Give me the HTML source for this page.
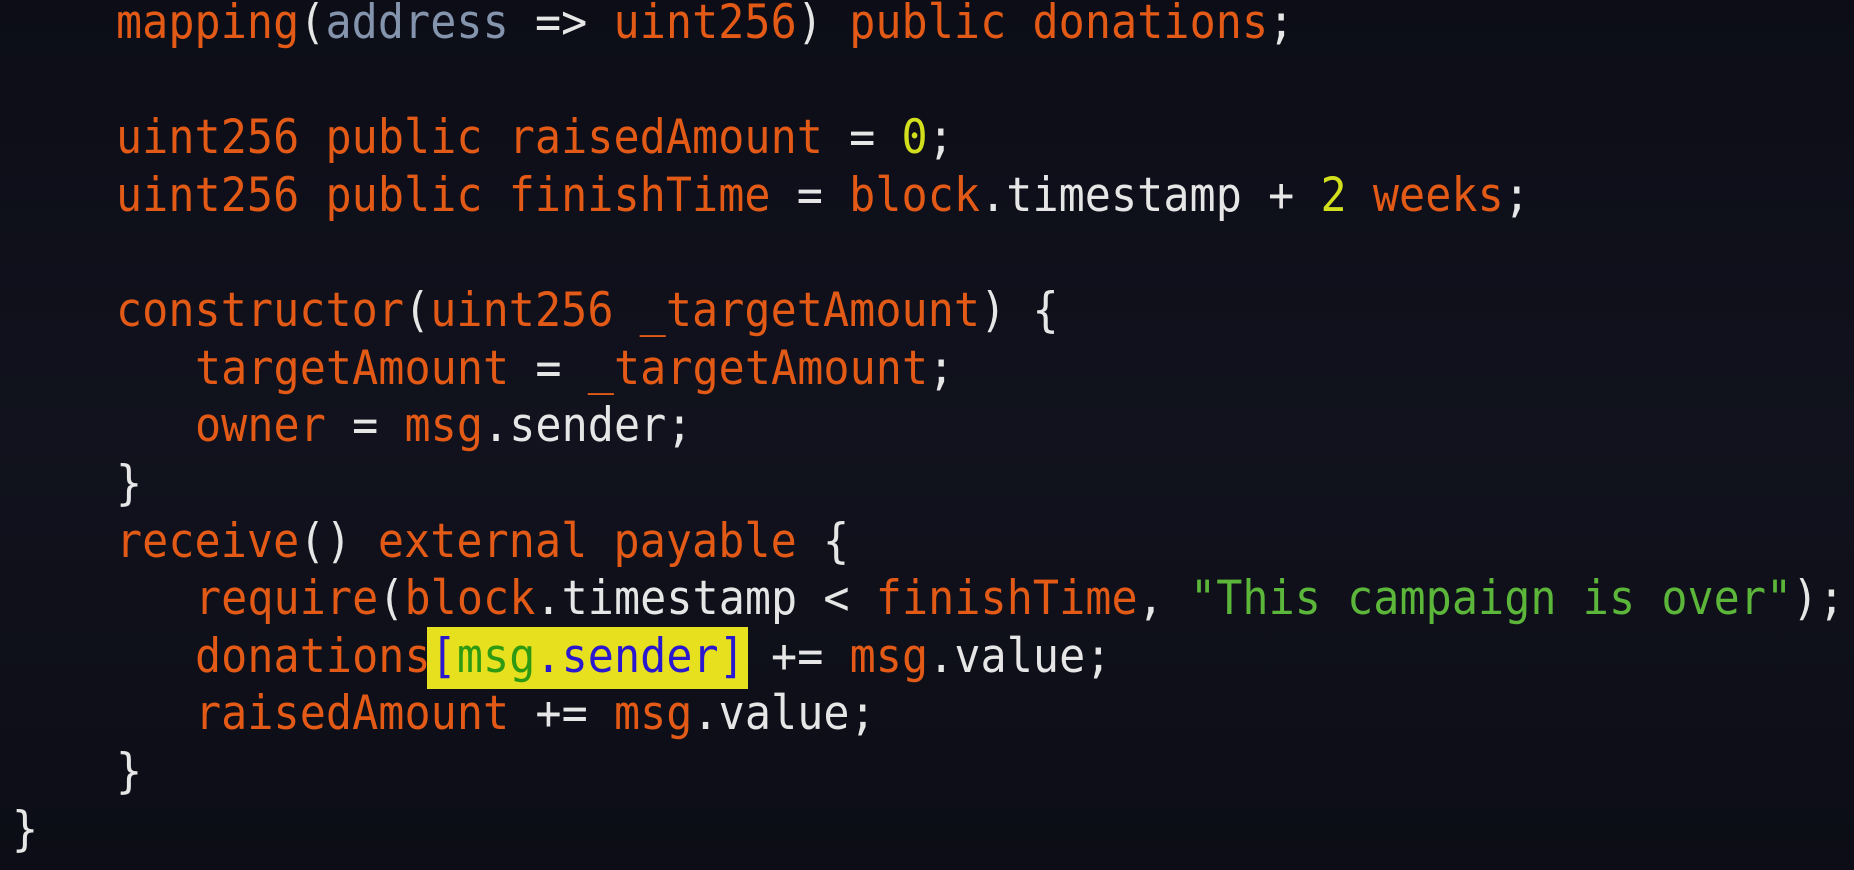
<!DOCTYPE html>
<html><head><meta charset="utf-8"><style>
html,body{margin:0;padding:0;width:1854px;height:870px;overflow:hidden;background:#0e0f1a;}
.c{position:absolute;left:0;top:0;width:1854px;height:870px;background:linear-gradient(#0c0d17,#11121d 50%,#0c0d16);}
.l{position:absolute;height:57.6px;line-height:57.6px;font-family:"DejaVu Sans Mono","Liberation Mono",monospace;font-size:43.4px;white-space:pre;color:#e6e6e6;transform:scaleY(1.08);transform-origin:left center;letter-spacing:0.06px;}
.o{color:#e35a16}.a{color:#8494ad}.y{color:#d2df1c}.g{color:#5cb63a}.w{color:#e6e6e6}
.hl{position:absolute;left:427px;top:627px;width:321px;height:62px;background:#e6e01e;}
.mg{color:#2d9a12}.bl{color:#2a18d0}
</style></head><body><div class="c"></div>
<div class="hl"></div>
<div class="l" style="left:116px;top:-5px"><span class="o">mapping</span>(<span class="a">address</span> =&gt; <span class="o">uint256</span>) <span class="o">public donations</span>;</div>
<div class="l" style="left:116px;top:110px"><span class="o">uint256 public raisedAmount</span> = <span class="y">0</span>;</div>
<div class="l" style="left:116px;top:168px"><span class="o">uint256 public finishTime</span> = <span class="o">block</span>.timestamp + <span class="y">2</span> <span class="o">weeks</span>;</div>
<div class="l" style="left:116px;top:283px"><span class="o">constructor</span>(<span class="o">uint256 _targetAmount</span>) {</div>
<div class="l" style="left:195px;top:341px"><span class="o">targetAmount</span> = <span class="o">_targetAmount</span>;</div>
<div class="l" style="left:195px;top:398px"><span class="o">owner</span> = <span class="o">msg</span>.sender;</div>
<div class="l" style="left:116px;top:456px">}</div>
<div class="l" style="left:116px;top:514px"><span class="o">receive</span>() <span class="o">external payable</span> {</div>
<div class="l" style="left:195px;top:571px"><span class="o">require</span>(<span class="o">block</span>.timestamp &lt; <span class="o">finishTime</span>, <span class="g">"This campaign is over"</span>);</div>
<div class="l" style="left:195px;top:629px"><span class="o">donations</span><span class="bl">[</span><span class="mg">msg</span><span class="bl">.sender]</span> += <span class="o">msg</span>.value;</div>
<div class="l" style="left:195px;top:686px"><span class="o">raisedAmount</span> += <span class="o">msg</span>.value;</div>
<div class="l" style="left:116px;top:744px">}</div>
<div class="l" style="left:12px;top:802px">}</div>
</body></html>
